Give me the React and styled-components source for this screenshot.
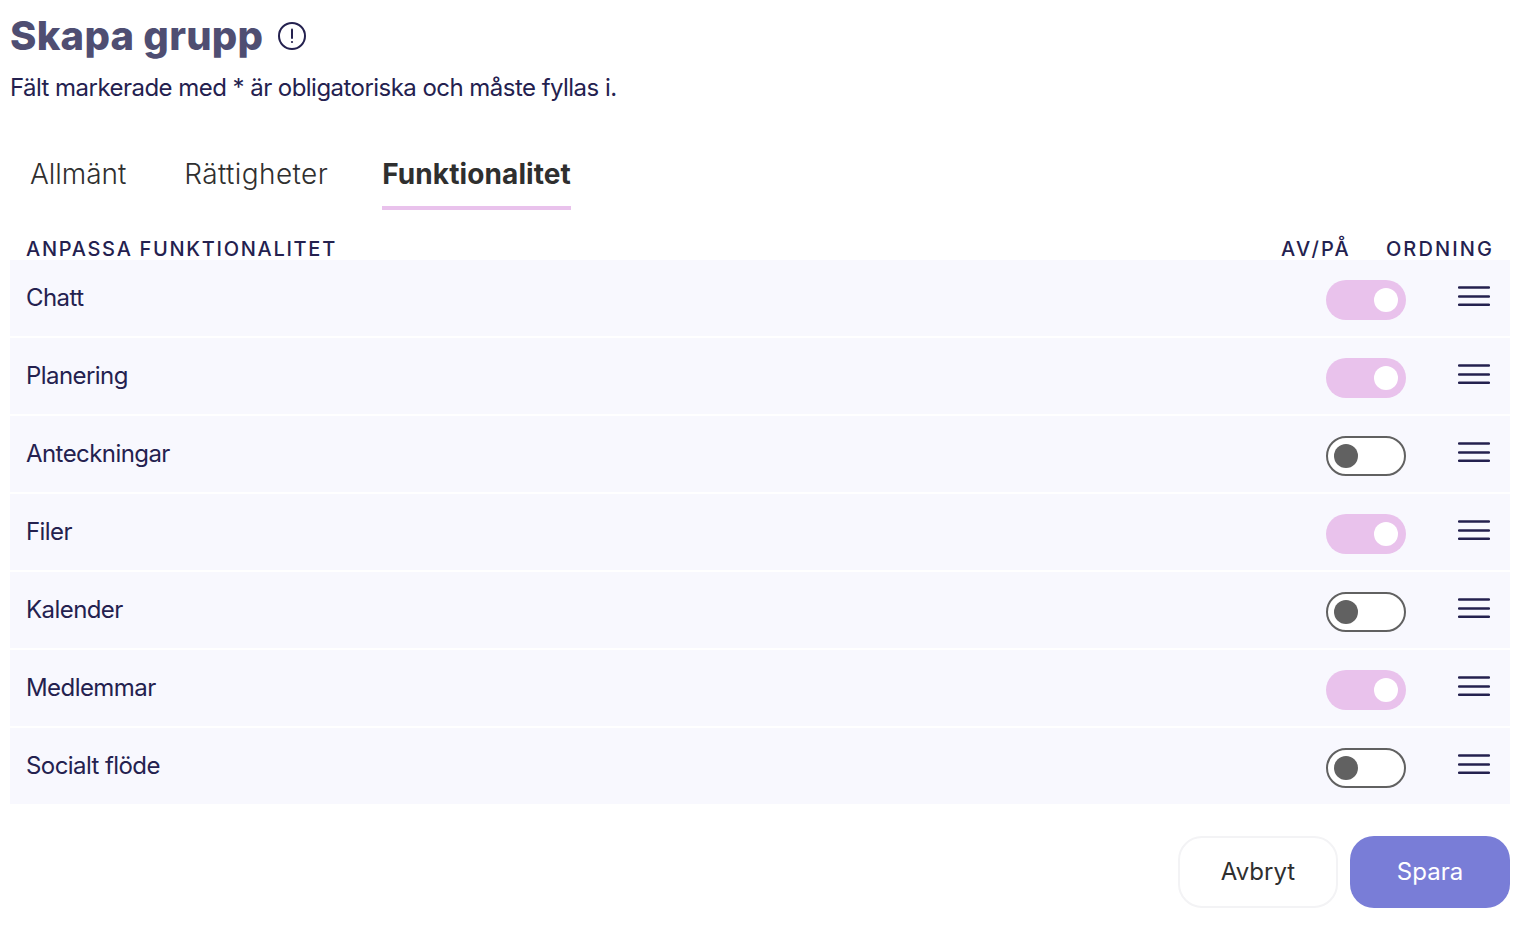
import React from 'react';
import styled, { createGlobalStyle } from 'styled-components';

const GlobalStyle = createGlobalStyle`
  html, body {
    margin: 0;
    background: #fff;
    font-family: Inter, "Liberation Sans", sans-serif;
    color: #24214f;
  }
  * { box-sizing: border-box; }
`;

const Page = styled.div`
  width: 1540px;
  height: 950px;
  padding: 12px 30px 0 10px;
  overflow: hidden;
`;

const TitleRow = styled.div`
  display: flex;
  align-items: center;
  gap: 14px;
  height: 48px;
`;

const Title = styled.h1`
  margin: 0;
  font-size: 40px;
  line-height: 48px;
  font-weight: 800;
  letter-spacing: 0.25px;
  color: #4f4e72;
`;

const Subtitle = styled.p`
  margin: 12px 0 0;
  font-size: 24px;
  line-height: 32px;
  letter-spacing: -0.54px;
  color: #24214f;
`;

const Tabs = styled.div`
  display: flex;
  gap: 54px;
  margin-top: 46px;
  padding-left: 20px;
`;

const Tab = styled.div`
  font-size: 28px;
  line-height: 40px;
  height: 60px;
  padding: 4px 0 0 ${p => p.$indent || 0}px;
  font-weight: ${p => (p.$active ? 700 : 300)};
  letter-spacing: ${p => p.$spacing}px;
  color: #2f2f2f;
  border-bottom: 4px solid ${p => (p.$active ? '#e9c2ec' : 'transparent')};
`;

const HeadRow = styled.div`
  display: flex;
  align-items: center;
  height: 30px;
  margin-top: 20px;
  padding: 8px 16px 0 16px;
  font-size: 20px;
  font-weight: 500;
  color: #24214f;
`;

const HeadLabel = styled.span`
  margin-right: ${p => p.$gap || 0}px;
  margin-left: ${p => (p.$push ? 'auto' : 0)};
  letter-spacing: ${p => p.$spacing}px;
  white-space: nowrap;
`;

const List = styled.div`
  display: flex;
  flex-direction: column;
  gap: 2px;
`;

const Row = styled.div`
  display: flex;
  align-items: center;
  height: 76px;
  padding: 0 20px 0 16px;
  background: #f8f8fe;
`;

const RowName = styled.span`
  flex: 1;
  font-size: 24px;
  line-height: 76px;
  letter-spacing: -0.57px;
  color: #24214f;
`;

const Toggle = styled.span`
  display: flex;
  align-items: center;
  justify-content: ${p => (p.$on ? 'flex-end' : 'flex-start')};
  width: 80px;
  height: 40px;
  margin: 4px 52px 0 0;
  padding: 0 ${p => (p.$on ? 8 : 6)}px;
  border-radius: 20px;
  background: ${p => (p.$on ? '#e9c2ec' : '#fff')};
  border: ${p => (p.$on ? 'none' : '2px solid #616161')};
`;

const Knob = styled.span`
  width: 24px;
  height: 24px;
  border-radius: 50%;
  background: ${p => (p.$on ? '#fff' : '#616161')};
`;

const Footer = styled.div`
  display: flex;
  justify-content: flex-end;
  gap: 12px;
  margin-top: 32px;
`;

const Button = styled.button`
  width: 160px;
  height: 72px;
  padding-bottom: 2px;
  border-radius: 24px;
  font-family: inherit;
  font-size: 24px;
  background: ${p => (p.$primary ? '#797dd7' : '#fff')};
  color: ${p => (p.$primary ? '#fff' : '#2f2f2f')};
  border: ${p => (p.$primary ? 'none' : '2px solid #f3f3f5')};
`;

const InfoIcon = () => (
  <svg width="30" height="30" viewBox="0 0 30 30" fill="none" stroke="#24214f" strokeWidth="2">
    <circle cx="15" cy="15" r="13" />
    <path d="M15 8.5v8.5" strokeLinecap="round" />
    <circle cx="15" cy="21" r="1.1" fill="#24214f" stroke="none" />
  </svg>
);

const DragIcon = () => (
  <svg width="32" height="20" viewBox="0 0 32 20" fill="none" stroke="#24214f" strokeWidth="2.4" strokeLinecap="round" style={{ marginBottom: 4 }}>
    <path d="M1 1.5h30M1 10.5h30M1 18.8h30" />
  </svg>
);

const features = [
  { name: 'Chatt', on: true },
  { name: 'Planering', on: true },
  { name: 'Anteckningar', on: false },
  { name: 'Filer', on: true },
  { name: 'Kalender', on: false },
  { name: 'Medlemmar', on: true },
  { name: 'Socialt flöde', on: false },
];

export default function App() {
  return (
    <Page>
      <GlobalStyle />
      <TitleRow>
        <Title>Skapa grupp</Title>
        <InfoIcon />
      </TitleRow>
      <Subtitle>Fält markerade med * är obligatoriska och måste fyllas i.</Subtitle>
      <Tabs>
        <Tab $spacing={-0.05}>Allmänt</Tab>
        <Tab $spacing={0.4} $indent={4}>Rättigheter</Tab>
        <Tab $active $spacing={0.1}>Funktionalitet</Tab>
      </Tabs>
      <HeadRow>
        <HeadLabel $spacing={1.7}>ANPASSA FUNKTIONALITET</HeadLabel>
        <HeadLabel $push $gap={35} $spacing={2.2}>AV/PÅ</HeadLabel>
        <HeadLabel $spacing={2.1}>ORDNING</HeadLabel>
      </HeadRow>
      <List>
        {features.map(f => (
          <Row key={f.name}>
            <RowName>{f.name}</RowName>
            <Toggle $on={f.on}><Knob $on={f.on} /></Toggle>
            <DragIcon />
          </Row>
        ))}
      </List>
      <Footer>
        <Button>Avbryt</Button>
        <Button $primary>Spara</Button>
      </Footer>
    </Page>
  );
}
